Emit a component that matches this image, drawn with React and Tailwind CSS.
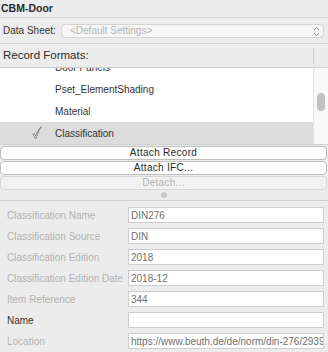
import React from 'react';

const font = { fontFamily: '"Liberation Sans", Arial, sans-serif' };

const fields = [
  { label: 'Classification Name', value: 'DIN276' },
  { label: 'Classification Source', value: 'DIN' },
  { label: 'Classification Edition', value: '2018' },
  { label: 'Classification Edition Date', value: '2018-12' },
  { label: 'Item Reference', value: '344' },
  { label: 'Name', value: '', active: true },
  { label: 'Location', value: 'https://www.beuth.de/de/norm/din-276/293948346' },
];

const records = ['Door Panels', 'Pset_ElementShading', 'Material', 'Classification'];

const Check = () => (
  <svg width="10" height="13" viewBox="0 0 10 13" className="absolute left-[32px] top-[4px]">
    <path
      d="M0.8 8.2 L2.2 7.2 L3.6 10.2 C5 6.5 6.8 3 9.3 0.7 C7.2 3.6 5.5 7.5 4.2 12.2 L3.2 12.2 Z"
      fill="white"
      stroke="#6b6b6b"
      strokeWidth="0.8"
      strokeLinejoin="round"
    />
  </svg>
);

const Chevrons = () => (
  <svg width="7" height="11" viewBox="0 0 7 11" className="absolute right-[3px] top-[1px]">
    <path d="M1 4 L3.5 1.5 L6 4" fill="none" stroke="#8a8a8a" strokeWidth="0.9" />
    <path d="M1 7 L3.5 9.5 L6 7" fill="none" stroke="#8a8a8a" strokeWidth="0.9" />
  </svg>
);

const Button = ({ children, disabled }) => (
  <div
    className={`h-[14px] mr-[1px] rounded-[4px] border flex items-center justify-center text-[10px] leading-none tracking-[0.3px] ${
      disabled ? 'bg-[#f2f2f2] border-[#d6d6d6] text-[#b3b3b3]' : 'bg-white border-[#bdbdbd] text-[#2a2a2a]'
    }`}
  >
    {children}
  </div>
);

export default function App() {
  return (
    <div className="w-[328px] h-[352px] bg-[#ececec] overflow-hidden text-[#222]" style={font}>
      {/* title */}
      <div className="h-[18px] border-b border-[#d5d5d5] flex items-center pl-[1px]">
        <span className="text-[10.5px] font-bold text-[#2b2b2b]">CBM-Door</span>
      </div>

      {/* data sheet */}
      <div className="h-[26px] border-b border-[#d3d3d3] flex items-center pl-[3px] pr-[4px]">
        <span className="text-[10px] text-[#333] w-[58px]">Data Sheet:</span>
        <div className="relative flex-1 h-[14px] rounded-[4px] bg-[#f6f6f6] border border-[#d4d4d4] flex items-center pl-[8px]">
          <span className="text-[10px] text-[#b5b5b5]">&lt;Default Settings&gt;</span>
          <Chevrons />
        </div>
      </div>

      {/* record formats header */}
      <div className="h-[24px] border-b border-[#cccccc] flex items-center pl-[3px]">
        <span className="flex-1 text-[11.5px] text-[#2b2b2b]">Record Formats:</span>
        <div className="w-[1px] h-[16px] bg-[#cfcfcf] mr-[14px]" />
      </div>

      {/* list */}
      <div className="h-[77px] flex border-b border-[#d0d0d0]">
        <div className="flex-1 bg-white overflow-hidden">
          <div className="mt-[-12px]">
            {records.map((r) => (
              <div
                key={r}
                className={`relative h-[22px] flex items-center pl-[55px] text-[10px] text-[#333] ${
                  r === 'Classification' ? 'bg-[#dcdcdc]' : ''
                }`}
              >
                {r === 'Classification' && <Check />}
                {r}
              </div>
            ))}
          </div>
        </div>
        <div className="w-[15px] bg-[#f8f8f8] border-l border-[#e4e4e4] pt-[25px] pl-[3px]">
          <div className="w-[8px] h-[18px] rounded-full bg-[#c2c2c2]" />
        </div>
      </div>

      {/* buttons */}
      <div className="pt-[1px] flex flex-col gap-[1px]">
        <Button>Attach Record</Button>
        <Button>Attach IFC...</Button>
        <Button disabled>Detach...</Button>
      </div>
      <div className="h-[10px] flex items-center justify-center">
        <div className="w-[6px] h-[6px] rounded-full bg-[#c9c9c9]" />
      </div>

      {/* fields */}
      <div className="border-t border-[#d0d0d0] pt-[6px] flex flex-col gap-[5px]">
        {fields.map((f) => (
          <div key={f.label} className="h-[16px] flex items-center pl-[7px] pr-[4px]">
            <span className={`w-[121px] text-[10px] ${f.active ? 'text-[#333]' : 'text-[#b3b3b3]'}`}>
              {f.label}
            </span>
            <div className="flex-1 h-[16px] bg-white border border-[#cecece] flex items-center pl-[2px] overflow-hidden">
              <span className="text-[10px] text-[#6f6f6f] whitespace-nowrap">{f.value}</span>
            </div>
          </div>
        ))}
      </div>
    </div>
  );
}
